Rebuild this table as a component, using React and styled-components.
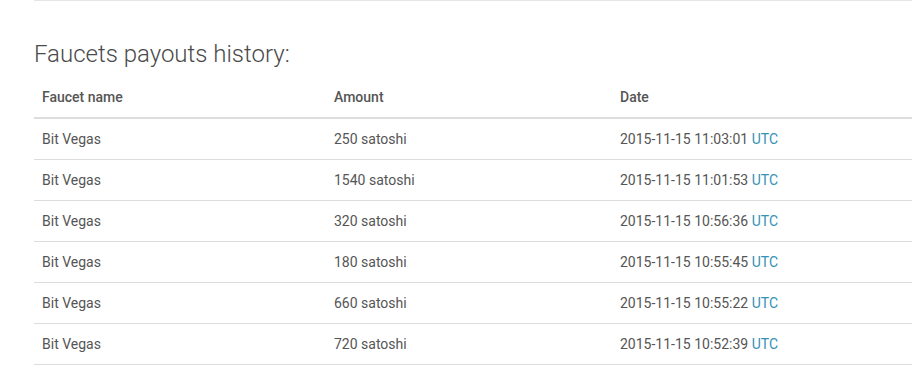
import styled, { createGlobalStyle } from "styled-components";

const GlobalStyle = createGlobalStyle`
  body {
    margin: 0;
    background: #ffffff;
    font-family: Roboto, "Liberation Sans", sans-serif;
    color: #444444;
  }
`;

const payouts = [
  { faucet: "Bit Vegas", amount: 250, date: "2015-11-15 11:03:01" },
  { faucet: "Bit Vegas", amount: 1540, date: "2015-11-15 11:01:53" },
  { faucet: "Bit Vegas", amount: 320, date: "2015-11-15 10:56:36" },
  { faucet: "Bit Vegas", amount: 180, date: "2015-11-15 10:55:45" },
  { faucet: "Bit Vegas", amount: 660, date: "2015-11-15 10:55:22" },
  { faucet: "Bit Vegas", amount: 720, date: "2015-11-15 10:52:39" },
];

export default function App() {
  return (
    <Page>
      <GlobalStyle />
      <Section>
        <Title>Faucets payouts history:</Title>
        <Table>
          <colgroup>
            <col style={{ width: 292 }} />
            <col style={{ width: 286 }} />
            <col />
          </colgroup>
          <thead>
            <tr>
              <HeadCell>Faucet name</HeadCell>
              <HeadCell>Amount</HeadCell>
              <HeadCell>Date</HeadCell>
            </tr>
          </thead>
          <tbody>
            {payouts.map((p, i) => (
              <tr key={i}>
                <Cell>{p.faucet}</Cell>
                <Cell>{p.amount} satoshi</Cell>
                <Cell>
                  {p.date} <Zone>UTC</Zone>
                </Cell>
              </tr>
            ))}
          </tbody>
        </Table>
      </Section>
    </Page>
  );
}

const Page = styled.div`
  width: 912px;
  height: 365px;
  overflow: hidden;
  padding-left: 34px;
  box-sizing: border-box;
`;

const Section = styled.div`
  border-top: 1px solid #e6e6e6;
  padding-top: 39px;
`;

const Title = styled.h3`
  margin: 0 0 13px;
  font-size: 24px;
  font-weight: 300;
  line-height: 28px;
  color: #4a4a4a;
`;

const Table = styled.table`
  width: 878px;
  border-collapse: collapse;
  table-layout: fixed;
  font-size: 14px;
`;

const HeadCell = styled.th`
  text-align: left;
  font-weight: 500;
  color: #555555;
  padding: 6px 8px 10px;
  line-height: 20px;
  border-bottom: 2px solid #dddddd;
`;

const Cell = styled.td`
  padding: 10px 8px;
  line-height: 20px;
  color: #555555;
  border-bottom: 1px solid #dddddd;
  white-space: nowrap;
`;

const Zone = styled.span`
  color: #3592b4;
`;
